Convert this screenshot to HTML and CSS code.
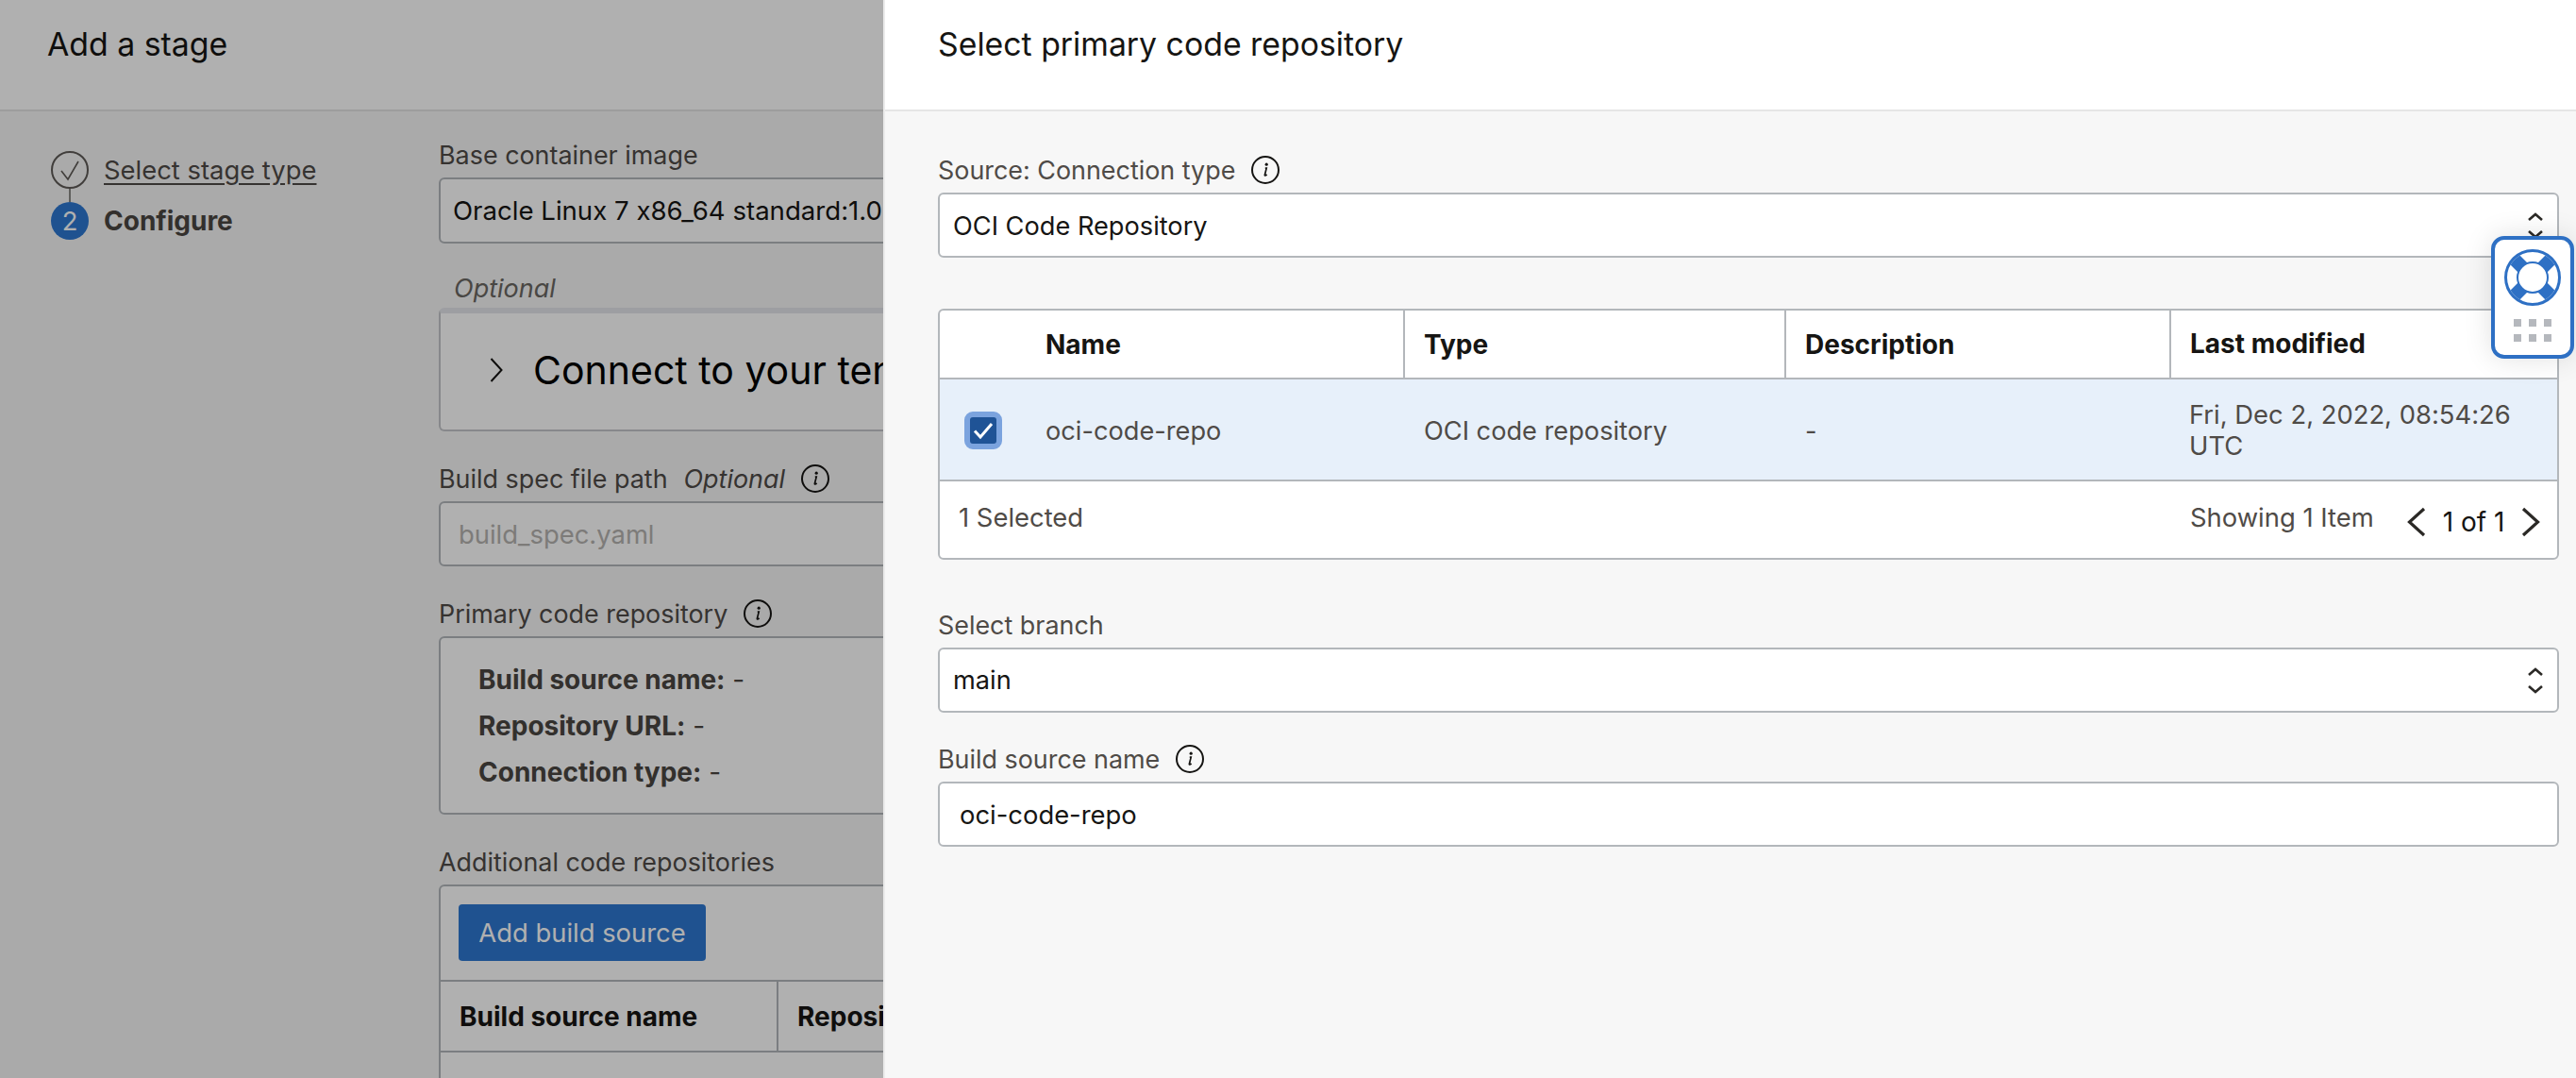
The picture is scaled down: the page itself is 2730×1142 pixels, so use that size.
FILE: index.html
```html
<!DOCTYPE html>
<html lang="en">
<head>
<meta charset="utf-8">
<title>Add a stage</title>
<link rel="stylesheet" href="styles.css">
</head>
<body>
<div class="stage">
  <header class="page-head"><h1 class="title">Add a stage</h1></header>
  <div class="stage-body">
    <nav class="steps">
      <div class="step">
        <svg class="step-icon" viewBox="0 0 40 40"><circle cx="20" cy="20" r="19" fill="none" stroke="#5f5b57" stroke-width="2"/><path d="M11 21l7 9 11-19" fill="none" stroke="#5f5b57" stroke-width="1.6"/></svg>
        <a class="step-link">Select stage type</a>
      </div>
      <div class="step-line"></div>
      <div class="step">
        <span class="step-num">2</span>
        <strong class="step-current">Configure</strong>
      </div>
    </nav>
    <main class="form">
      <div class="label">Base container image</div>
      <div class="field field-base">Oracle Linux 7 x86_64 standard:1.0</div>

      <div class="optional">Optional</div>
      <div class="collapse">
        <svg class="collapse-chev" viewBox="0 0 14 26"><path d="M1.5 1l11 12-11 12" fill="none" stroke="#161513" stroke-width="2"/></svg>
        <span class="collapse-text">Connect to your tenancy</span>
      </div>

      <div class="label label-gap"><span>Build spec file path</span><em class="label-opt">Optional</em>
        <svg class="info" viewBox="0 0 30 30"><circle cx="15" cy="15" r="14" fill="none" stroke="#161513" stroke-width="2"/><circle cx="16.2" cy="9.2" r="1.6" fill="#161513"/><path d="M14.8 13.2h1.4l-1.8 7c-.2 1 .7 1.2 2.2-.3" fill="none" stroke="#161513" stroke-width="1.7"/></svg>
      </div>
      <div class="field field-placeholder">build_spec.yaml</div>

      <div class="label label-gap"><span>Primary code repository</span>
        <svg class="info" viewBox="0 0 30 30"><circle cx="15" cy="15" r="14" fill="none" stroke="#161513" stroke-width="2"/><circle cx="16.2" cy="9.2" r="1.6" fill="#161513"/><path d="M14.8 13.2h1.4l-1.8 7c-.2 1 .7 1.2 2.2-.3" fill="none" stroke="#161513" stroke-width="1.7"/></svg>
      </div>
      <div class="summary">
        <div class="summary-row"><b>Build source name:</b> -</div>
        <div class="summary-row"><b>Repository URL:</b> -</div>
        <div class="summary-row"><b>Connection type:</b> -</div>
      </div>

      <div class="label label-gap">Additional code repositories</div>
      <div class="additional">
        <div class="additional-bar"><button class="btn">Add build source</button></div>
        <div class="mini-head">
          <div class="mini-cell mini-first">Build source name</div>
          <div class="mini-cell">Repository URL</div>
        </div>
        <div class="mini-empty">To see data</div>
      </div>
    </main>
  </div>
</div>

<div class="scrim"></div>

<aside class="panel">
  <header class="panel-head"><h2 class="title">Select primary code repository</h2></header>
  <div class="panel-body">
    <div class="label"><span>Source: Connection type</span>
      <svg class="info" viewBox="0 0 30 30"><circle cx="15" cy="15" r="14" fill="none" stroke="#161513" stroke-width="2"/><circle cx="16.2" cy="9.2" r="1.6" fill="#161513"/><path d="M14.8 13.2h1.4l-1.8 7c-.2 1 .7 1.2 2.2-.3" fill="none" stroke="#161513" stroke-width="1.7"/></svg>
    </div>
    <div class="field select select-source">OCI Code Repository
      <svg class="updown" viewBox="0 0 18 30"><path d="M2 9l7-6 7 6M2 21l7 6 7-6" fill="none" stroke="#2b2926" stroke-width="2.6"/></svg>
    </div>

    <div class="table">
      <div class="tr th">
        <div class="td td-first">Name</div>
        <div class="td">Type</div>
        <div class="td">Description</div>
        <div class="td td-last">Last modified</div>
      </div>
      <div class="tr tr-selected">
        <div class="td td-first">
          <span class="check"><svg viewBox="0 0 28 28"><path d="M5 14.5l6 6.5 12-14" fill="none" stroke="#fff" stroke-width="3"/></svg></span>
          <span>oci-code-repo</span>
        </div>
        <div class="td">OCI code repository</div>
        <div class="td">-</div>
        <div class="td td-last">Fri, Dec 2, 2022, 08:54:26 UTC</div>
      </div>
      <div class="tr tr-foot">
        <div class="foot-left">1 Selected</div>
        <div class="foot-right">
          <span class="showing">Showing 1 Item</span>
          <div class="pager">
            <svg class="pager-chev" viewBox="0 0 20 32"><path d="M18 2L2.5 16 18 30" fill="none" stroke="#2b2926" stroke-width="3.2"/></svg>
            <span>1 of 1</span>
            <svg class="pager-chev" viewBox="0 0 20 32"><path d="M2 2l15.5 14L2 30" fill="none" stroke="#2b2926" stroke-width="3.2"/></svg>
          </div>
        </div>
      </div>
    </div>

    <div class="label label-branch">Select branch</div>
    <div class="field select">main
      <svg class="updown" viewBox="0 0 18 30"><path d="M2 9l7-6 7 6M2 21l7 6 7-6" fill="none" stroke="#2b2926" stroke-width="2.6"/></svg>
    </div>

    <div class="label label-name"><span>Build source name</span>
      <svg class="info" viewBox="0 0 30 30"><circle cx="15" cy="15" r="14" fill="none" stroke="#161513" stroke-width="2"/><circle cx="16.2" cy="9.2" r="1.6" fill="#161513"/><path d="M14.8 13.2h1.4l-1.8 7c-.2 1 .7 1.2 2.2-.3" fill="none" stroke="#161513" stroke-width="1.7"/></svg>
    </div>
    <div class="field field-input">oci-code-repo</div>
  </div>
</aside>

<div class="help-widget">
  <svg class="buoy" viewBox="0 0 54 54">
    <path d="M7 7l40 40M47 7L7 47" stroke="#2e70c4" stroke-width="14"/>
    <circle cx="27" cy="27" r="16" fill="#fff" stroke="#2e70c4" stroke-width="2"/>
    <circle cx="27" cy="27" r="13.5" fill="#fff"/>
  </svg>
  <div class="grip">
    <i></i><i></i><i></i><i></i><i></i><i></i>
  </div>
</div>
</body>
</html>
```
FILE: styles.css
```css
* { box-sizing: border-box; }
html, body { margin: 0; height: 100%; overflow: hidden; }
body {
  position: relative;
  width: 2730px;
  height: 1142px;
  background: #f7f7f7;
  font-family: Inter, "Liberation Sans", sans-serif;
  font-size: 27.4px;
  font-feature-settings: "calt" 0;
  color: #161513;
}
.stage { height: 1142px; overflow: hidden; }
.page-head {
  height: 118px;
  background: #fff;
  border-bottom: 2px solid #e4e4e4;
  padding: 0 50px 24px;
  display: flex;
  align-items: center;
}
.title { margin: 0; font-size: 33.8px; font-weight: 400; color: #161513; }
.stage-body { display: flex; }
.steps { width: 465px; padding: 42px 0 0 54px; flex: none; }
.step { display: flex; align-items: center; gap: 16px; height: 40px; }
.step-icon { width: 40px; height: 40px; flex: none; }
.step-line { width: 2px; height: 14px; background: #8a8886; margin-left: 19px; }
.step-link { text-decoration: underline; color: #4f4b47; text-underline-offset: 4px; }
.step-num {
  width: 40px; height: 40px; flex: none; border-radius: 50%;
  background: #2d77d1; color: #fff;
  display: flex; align-items: center; justify-content: center;
}
.step-current { font-weight: 700; font-size: 28px; color: #4a4642; }
.form { width: 1600px; flex: none; padding-top: 29px; }
.label {
  height: 34px; line-height: 34px; margin-bottom: 7px; font-size: 26.9px;
  color: #4f4b47; display: flex; align-items: center; gap: 17px; white-space: nowrap;
}
.label-opt { color: #4f4b47; }
.label-gap { margin-top: 33px; }
.info { width: 30px; height: 30px; flex: none; }
.field {
  position: relative;
  height: 69px; background: #fff;
  border: 2px solid #b3b7bb; border-radius: 6px;
  display: flex; align-items: center;
  padding: 0 13px; color: #161513; white-space: nowrap;
}
.field-base { height: 70px; font-size: 27.6px; }
.field-placeholder { color: #b5b3b0; padding-left: 19px; }
.optional { height: 34px; line-height: 34px; margin: 31px 0 3px 16px; font-size: 27px; font-style: italic; color: #6b6763; }
.collapse {
  height: 131px; background: #fff;
  border: 2px solid #c4c6ca; border-top: 6px solid #e4e5eb; border-radius: 6px;
  display: flex; align-items: center; gap: 32px; padding: 0 0 4px 52px;
}
.collapse-chev { width: 14px; height: 26px; flex: none; }
.collapse-text { font-size: 41px; color: #000; white-space: nowrap; }
.summary {
  height: 189px; background: #fff;
  border: 2px solid #b3b7bb; border-radius: 6px;
  padding: 20px 40px;
}
.summary-row { height: 49px; line-height: 49px; color: #4a4642; font-size: 28px; }
.summary-row b { font-weight: 700; }
.additional { background: #fff; border: 2px solid #b3b7bb; border-bottom: 0; border-radius: 6px 6px 0 0; height: 300px; }
.additional-bar { padding: 19px; height: 99px; }
.btn {
  height: 60px; width: 262px; border: 0; border-radius: 4px;
  background: #2d77d1; color: #fff; font: inherit;
}
.mini-head { display: flex; height: 77px; border-top: 2px solid #b3b7bb; border-bottom: 2px solid #b3b7bb; }
.mini-cell { display: flex; align-items: center; padding-left: 20px; font-weight: 700; font-size: 28px; flex: 1; color: #161513; }
.mini-first { flex: none; width: 358px; padding-left: 20px; border-right: 2px solid #b3b7bb; }
.mini-empty { margin: 22px 0 0 336px; color: #4a4642; }
.scrim { position: absolute; inset: 0; background: rgba(0, 0, 0, .31); }
.panel {
  position: absolute; left: 936px; top: 0; right: 0; bottom: 0;
  background: #f7f7f7; border-left: 2px solid #ebebeb;
}
.panel-head {
  height: 118px; background: #fff; border-bottom: 2px solid #e6e6e6;
  padding: 0 56px 24px; display: flex; align-items: center;
}
.panel-body { padding: 45px 18px 0 56px; }
.select { padding-left: 14px; font-size: 27.2px; }
.select-source { padding-top: 2px; }
.updown { position: absolute; right: 14px; top: 18px; width: 18px; height: 30px; }
.table { margin-top: 54px; background: #fff; border: 2px solid #b3b7bb; border-radius: 6px; }
.tr { display: grid; grid-template-columns: 493px 404px 408px 1fr; }
.th { height: 73px; border-bottom: 2px solid #b3b7bb; font-weight: 700; font-size: 28px; color: #161513; }
.th .td { border-right: 2px solid #b3b7bb; }
.th .td-last { border-right: 0; }
.td { display: flex; align-items: center; padding: 0 20px; }
.td-first { padding-left: 112px; }
.tr-selected { height: 108px; background: #e7f0fa; border-bottom: 2px solid #b3b7bb; color: #4f4b47; font-size: 27.2px; }
.tr-selected .td { padding-top: 2px; }
.tr-selected .td-first { padding-left: 26px; gap: 46px; }
.tr-selected .td-last { padding-left: 19px; font-size: 27.4px; }
.td-last { padding-right: 20px; line-height: 33px; }
.check {
  width: 40px; height: 40px; flex: none; border-radius: 9px;
  background: #1f5396; border: 6px solid #7ba3de; display: block;
}
.check svg { display: block; width: 28px; height: 28px; }
.tr-foot { height: 81px; color: #4f4b47; align-items: center; }
.foot-left { padding: 0 0 6px 20px; }
.foot-right { grid-column: 4; display: flex; align-items: center; padding-left: 20px; }
.showing { padding-bottom: 6px; }
.pager { display: flex; align-items: center; gap: 18px; margin-left: 35px; padding-top: 4px; color: #161513; font-size: 28px; }
.pager-chev { width: 20px; height: 32px; flex: none; }
.label-branch { margin-top: 52px; }
.label-name { margin-top: 32px; }
.field-input { padding-left: 21px; }
.help-widget {
  position: absolute; left: 2640px; top: 250px; width: 88px; height: 130px;
  background: #fff; border: 4px solid #2e70c4; border-radius: 14px;
  box-shadow: 0 0 30px rgba(0, 0, 0, .12);
  display: flex; flex-direction: column; align-items: center; padding-top: 10px;
}
.buoy { width: 60px; height: 60px; display: block; border-radius: 50%; border: 3px solid #2e70c4; }
.grip { display: grid; grid-template-columns: repeat(3, 8px); gap: 8px; margin-top: 14px; }
.grip i { display: block; width: 8px; height: 8px; background: #b5b8bd; }
```
